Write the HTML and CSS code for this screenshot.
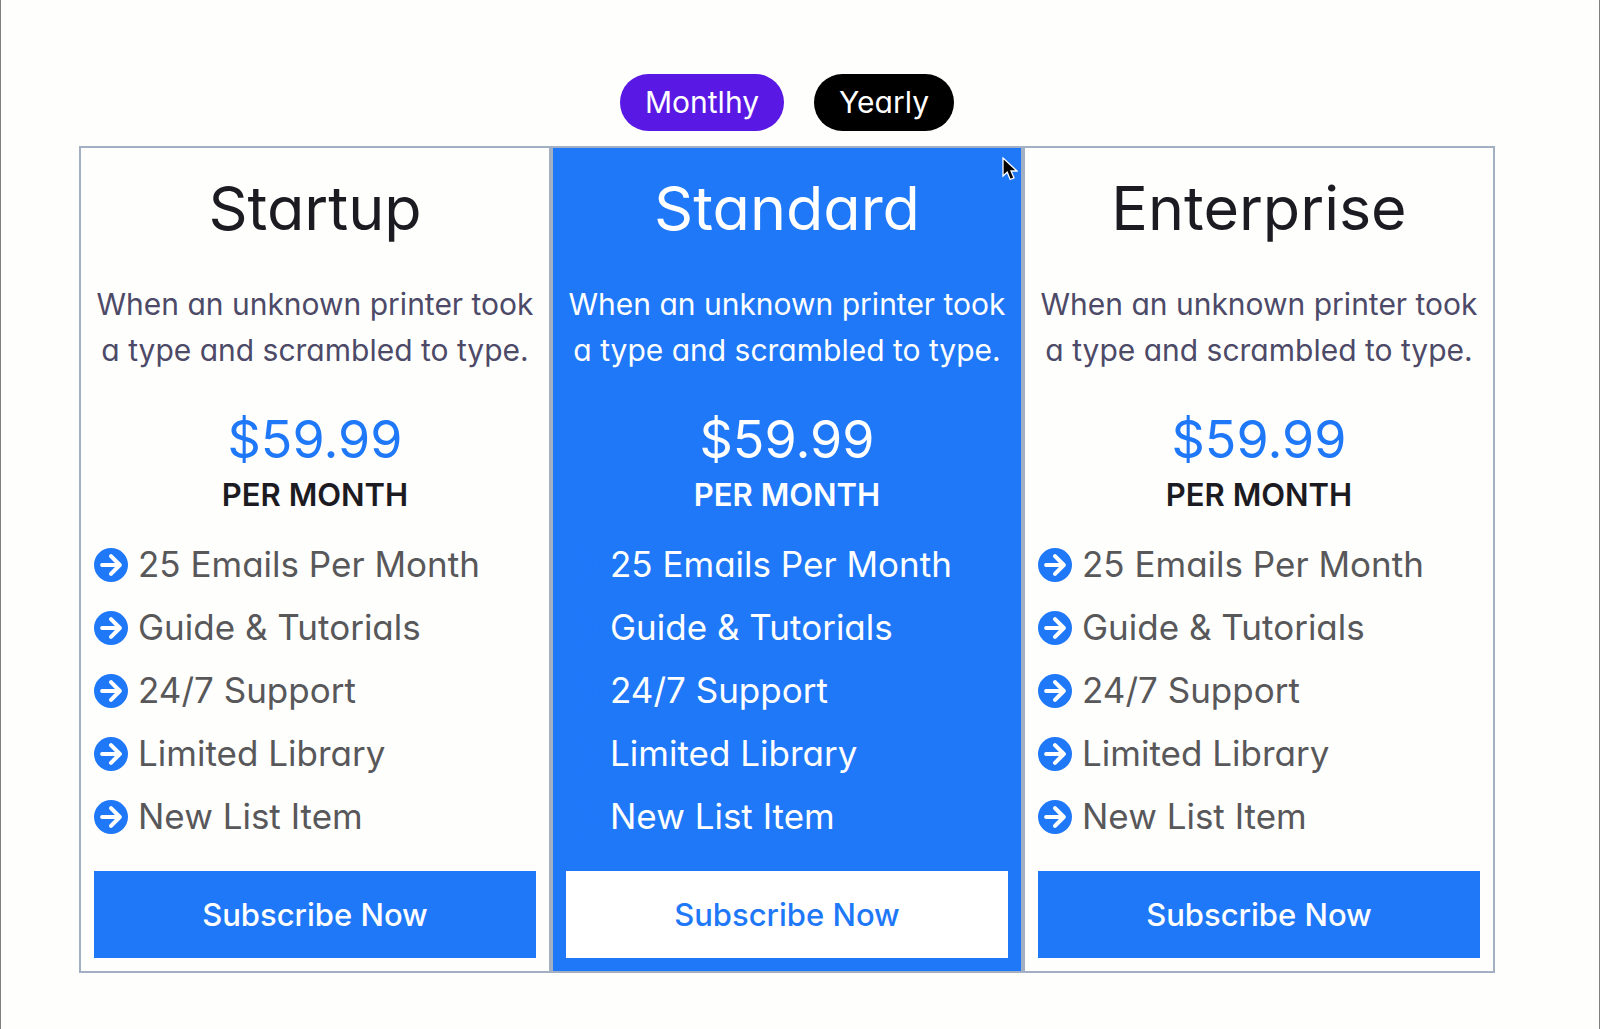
FILE: index.html
```html
<!DOCTYPE html>
<html lang="en">
<head>
    <meta charset="UTF-8">
    <meta name="viewport" content="width=device-width, initial-scale=1.0">
    <title>Pricing Table</title>
    <link rel="stylesheet" href="styles.css">
</head>
<body>
    <svg class="sprite" aria-hidden="true">
        <symbol id="arrow" viewBox="0 0 100 100">
            <circle cx="50" cy="50" r="50" fill="currentColor"/>
            <path class="arrow-line" d="M24 50H76M50 24L76 50L50 76" fill="none" stroke-width="12" stroke-linecap="round" stroke-linejoin="round"/>
        </symbol>
    </svg>

    <main class="pricing">
        <div class="tabs">
            <button class="tab active" type="button">Montlhy</button>
            <button class="tab" type="button">Yearly</button>
        </div>

        <div class="plans">
            <section class="plan">
                <h2 class="title">Startup</h2>
                <p class="text">When an unknown printer took a type and scrambled to type.</p>
                <div class="price">$59.99</div>
                <div class="period">PER MONTH</div>
                <ul class="features">
                    <li><svg class="icon"><use href="#arrow"/></svg>25 Emails Per Month</li>
                    <li><svg class="icon"><use href="#arrow"/></svg>Guide &amp; Tutorials</li>
                    <li><svg class="icon"><use href="#arrow"/></svg>24/7 Support</li>
                    <li><svg class="icon"><use href="#arrow"/></svg>Limited Library</li>
                    <li><svg class="icon"><use href="#arrow"/></svg>New List Item</li>
                </ul>
                <button class="subscribe" type="button">Subscribe Now</button>
            </section>

            <section class="plan featured">
                <h2 class="title">Standard</h2>
                <p class="text">When an unknown printer took a type and scrambled to type.</p>
                <div class="price">$59.99</div>
                <div class="period">PER MONTH</div>
                <ul class="features">
                    <li><svg class="icon"><use href="#arrow"/></svg>25 Emails Per Month</li>
                    <li><svg class="icon"><use href="#arrow"/></svg>Guide &amp; Tutorials</li>
                    <li><svg class="icon"><use href="#arrow"/></svg>24/7 Support</li>
                    <li><svg class="icon"><use href="#arrow"/></svg>Limited Library</li>
                    <li><svg class="icon"><use href="#arrow"/></svg>New List Item</li>
                </ul>
                <button class="subscribe" type="button">Subscribe Now</button>
                <svg class="cursor" viewBox="0 0 16 24" aria-hidden="true">
                    <path d="M1 1V19L5.200 15.200L8.200 22.500L12 20.900L9 14H15Z" fill="#000" stroke="#fff" stroke-width="1.300"/>
                </svg>
            </section>

            <section class="plan">
                <h2 class="title">Enterprise</h2>
                <p class="text">When an unknown printer took a type and scrambled to type.</p>
                <div class="price">$59.99</div>
                <div class="period">PER MONTH</div>
                <ul class="features">
                    <li><svg class="icon"><use href="#arrow"/></svg>25 Emails Per Month</li>
                    <li><svg class="icon"><use href="#arrow"/></svg>Guide &amp; Tutorials</li>
                    <li><svg class="icon"><use href="#arrow"/></svg>24/7 Support</li>
                    <li><svg class="icon"><use href="#arrow"/></svg>Limited Library</li>
                    <li><svg class="icon"><use href="#arrow"/></svg>New List Item</li>
                </ul>
                <button class="subscribe" type="button">Subscribe Now</button>
            </section>
        </div>
    </main>
</body>
</html>
```

FILE: styles.css
```css
* {
    box-sizing: border-box;
}
body {
    margin: 0;
    min-height: 100vh;
    background: #fefefd;
    border-left: 1px solid #808080;
    border-right: 1px solid #808080;
    font-family: Inter, "Liberation Sans", sans-serif;
    font-feature-settings: "cv11";
    color: #1c1b22;
}
button {
    font: inherit;
    font-feature-settings: inherit;
    border: 0;
    cursor: pointer;
}
.sprite {
    display: none;
}
.pricing {
    padding: 74px 104px 56px 78px;
}
.tabs {
    display: flex;
    justify-content: center;
    gap: 30px;
    margin-bottom: 15px;
}
.tab {
    padding: 0 25px;
    border-radius: 29px;
    background: #000;
    color: #fff;
    font-size: 30px;
    line-height: 57px;
}
.tab.active {
    background: #5a18e4;
}
.plans {
    display: grid;
    grid-template-columns: repeat(3, 1fr);
}
.plan {
    position: relative;
    padding: 14px 13px 13px;
    border: 2px solid #a3afc3;
    text-align: center;
}
.title {
    margin: 0;
    font-size: 61px;
    font-weight: 400;
    line-height: 92px;
}
.text {
    margin: 27px 0 37px;
    color: #4d4a68;
    font-size: 30px;
    line-height: 46px;
}
.price {
    color: #1e78f8;
    font-size: 52px;
    line-height: 60px;
}
.period {
    font-size: 31px;
    font-weight: 600;
    line-height: 50px;
}
.features {
    margin: 13px 0 23px;
    padding: 0;
    list-style: none;
    color: #58585a;
    font-size: 35px;
    line-height: 63px;
    text-align: left;
}
.features li {
    display: flex;
    align-items: center;
    gap: 10px;
}
.icon {
    width: 34px;
    height: 34px;
    color: #1e78f8;
}
.arrow-line {
    stroke: var(--arrow, #fff);
}
.subscribe {
    width: 100%;
    padding: 0;
    background: #1e78f8;
    color: #fff;
    font-size: 31px;
    font-weight: 500;
    line-height: 87px;
}
.featured {
    --arrow: #1e78f8;
    background: #1e78f8;
    color: #fff;
}
.featured .text,
.featured .price,
.featured .features {
    color: #fff;
}
.featured .subscribe {
    background: #fff;
    color: #1e78f8;
}
/* pointer over the corner of the featured plan */
.cursor {
    position: absolute;
    top: 9px;
    right: 3px;
    width: 16px;
    height: 24px;
}
```
